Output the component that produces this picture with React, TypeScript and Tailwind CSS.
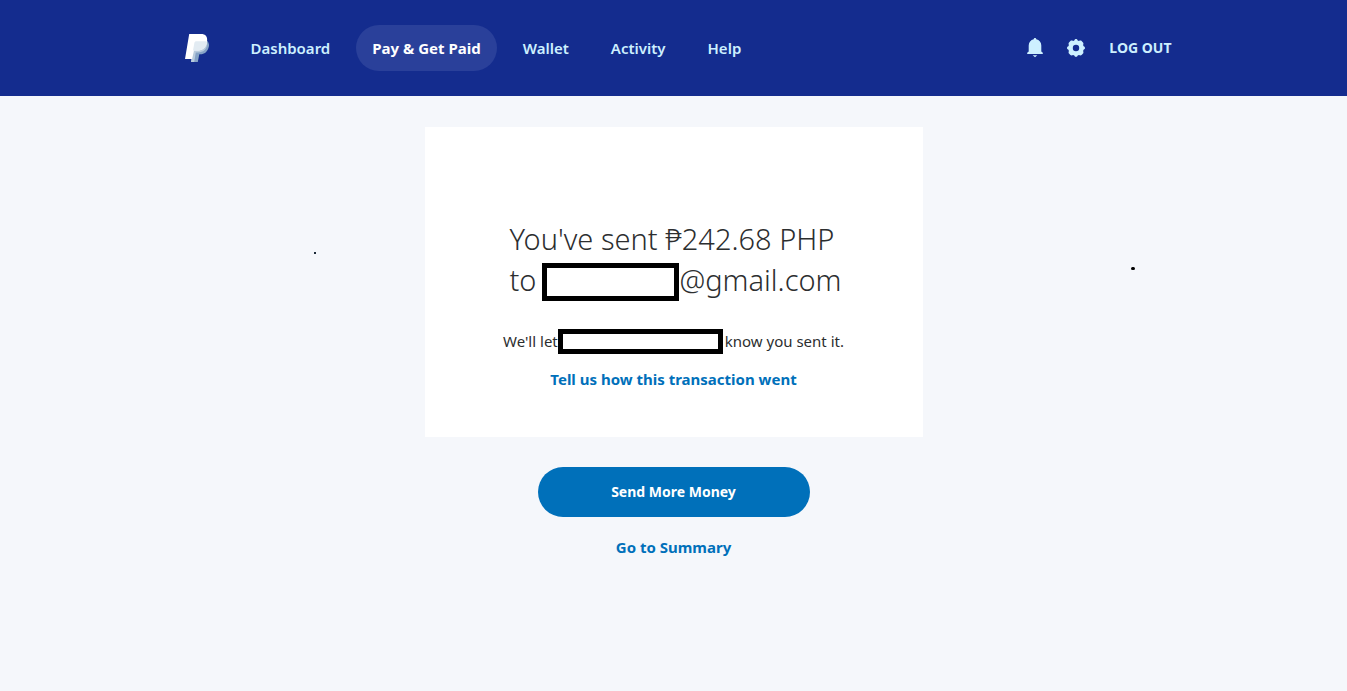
import type { ReactNode } from 'react';

import clsx from 'clsx';

const navItems = [
  { label: 'Dashboard', active: false },
  { label: 'Pay & Get Paid', active: true },
  { label: 'Wallet', active: false },
  { label: 'Activity', active: false },
  { label: 'Help', active: false },
];

const Logo = () => (
  <svg width="24" height="28" viewBox="0 0 24 28" aria-hidden="true">
    <path
      d="M21.900 6.800c1.800 1.500 2.500 3.600 1.900 6-1.100 5-4.400 7.500-8.500 7.500h-1L12.800 28H6l1.300-7z"
      fill="#86a3c6"
    />
    <path
      d="M8.600 8.500h9.400c2 0 3.600.2 4.300 1.100-.6 6-4 8.900-9.300 8.900h-2.200L9.200 28H6z"
      fill="#b9cbdc"
    />
    <path
      d="M4.200 0h11.600c5 0 6.900 2.700 6.300 7.200-.8 6.200-4.300 9.300-9.900 9.300H9L7.100 25.100H0z"
      fill="#fff"
    />
    <path
      d="M9.400 8.800c.2-1 .9-1.600 1.900-1.600h7.300c1.500 0 2.600.1 3.500.6-.8 5.800-4.400 8.700-9.900 8.700H8z"
      fill="#e2ebf2"
    />
  </svg>
);

const BellIcon = () => (
  <svg width="16" height="20" viewBox="0 0 16 20" fill="currentColor" aria-hidden="true">
    <path d="M8 0c.7 0 1.200.5 1.300 1.200 3 .6 5 3 5 6.300v6l1.500 1.300V16H.2v-1.200l1.500-1.300v-6c0-3.300 2-5.700 5-6.300C6.800.5 7.300 0 8 0zM5.700 17.200h4.600L8 19.200z" />
  </svg>
);

const GearIcon = () => (
  <svg width="18" height="18" viewBox="0 0 18 18" fill="currentColor" aria-hidden="true">
    <path
      fillRule="evenodd"
      d="M7.300 1.400C7.700.4 8.300 0 9 0s1.300.4 1.700 1.400l1.200.5c1.200-.5 2.200-.4 2.700.1l1.400 1.400c.5.5.6 1.500.1 2.700l.5 1.200c1 .4 1.400 1 1.400 1.700s-.4 1.300-1.400 1.700l-.5 1.200c.5 1.200.4 2.200-.1 2.700l-1.400 1.400c-.5.5-1.500.6-2.700.1l-1.200.5c-.4 1-1 1.400-1.700 1.400s-1.300-.4-1.700-1.400l-1.200-.5c-1.200.5-2.200.4-2.700-.1L2 14.600c-.5-.5-.6-1.500-.1-2.700l-.5-1.200C.4 10.300 0 9.700 0 9s.4-1.300 1.400-1.700l.5-1.200C1.400 4.900 1.500 3.900 2 3.400L3.400 2c.5-.5 1.500-.6 2.700-.1zM9 5.800a3.200 3.200 0 1 0 0 6.400 3.200 3.200 0 0 0 0-6.400z"
    />
  </svg>
);

const Redacted = ({ className }: { className: string }) => (
  <span
    role="img"
    aria-label="Hidden recipient"
    className={clsx('inline-block bg-white border-black border-[5px]', className)}
  />
);

const TextLink = ({ children }: { children: ReactNode }) => (
  <a href="#" className="font-bold text-[#0070ba] hover:underline">
    {children}
  </a>
);

const Header = () => (
  <header className="bg-[#142c8e] text-[#cdf0ff]">
    <div className="mx-auto flex h-24 max-w-[996px] items-center justify-between pl-[9px]">
      <div className="flex items-center gap-[26px]">
        <a href="#" aria-label="PayPal">
          <Logo />
        </a>
        <nav className="flex items-center gap-[10px]">
          {navItems.map((item) => (
            <a
              key={item.label}
              href="#"
              aria-current={item.active ? 'page' : undefined}
              className={clsx(
                'flex h-[46px] items-center rounded-full px-4',
                item.active ? 'bg-[#2a409a] font-bold text-white' : 'font-semibold'
              )}
            >
              {item.label}
            </a>
          ))}
        </nav>
      </div>
      <div className="flex items-center gap-6">
        <button type="button" aria-label="Notifications">
          <BellIcon />
        </button>
        <button type="button" aria-label="Settings">
          <GearIcon />
        </button>
        <a href="#" className="text-sm font-bold">
          LOG OUT
        </a>
      </div>
    </div>
  </header>
);

const App = () => (
  <div className="min-h-screen bg-[#f5f7fb] font-['Noto_Sans',sans-serif] text-[15px] text-[#2c2e2f]">
    <Header />
    <main className="relative flex flex-col items-center pt-[31px] pb-8">
      <span className="absolute top-[156px] left-[23.3%] size-[2px] bg-[#1b2a38]" />
      <span className="absolute top-[171px] left-[84%] h-[3px] w-1 rounded-full bg-black" />

      <section className="flex w-full max-w-[498px] flex-col items-center bg-white pt-[92px] pb-[46px]">
        <h1 className="pl-1 text-[29px] leading-10 font-light">
          You&apos;ve sent ₱242.68 PHP
          <br />
          <span className="flex items-center">
            to <Redacted className="mt-1 ml-[6px] h-[38px] w-[137px]" />
            @gmail.com
          </span>
        </h1>
        <p className="mt-7 flex h-[25px] items-center">
          We&apos;ll let
          <Redacted className="mr-[2px] h-[25px] w-[165px]" />
          know you sent it.
        </p>
        <p className="mt-[13px] leading-6">
          <TextLink>Tell us how this transaction went</TextLink>
        </p>
      </section>

      <button
        type="button"
        className="mt-[30px] h-[50px] w-[272px] rounded-full bg-[#0070ba] text-sm font-bold text-white"
      >
        Send More Money
      </button>
      <p className="mt-[18px] leading-6">
        <TextLink>Go to Summary</TextLink>
      </p>
    </main>
  </div>
);

export default App;
